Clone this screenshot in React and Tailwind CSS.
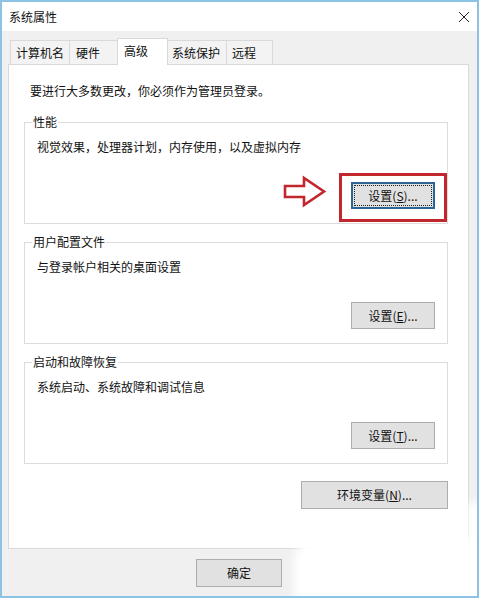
import React from "react";

const font = "font-['Noto_Sans_CJK_SC','Microsoft_YaHei',sans-serif]";

function Tab({ label, width, pl, selected, first }) {
  if (selected) {
    return (
      <div
        className={`relative z-10 -ml-px mb-[-1px] h-[27px] border-x border-t border-[#d9d9d9] bg-white pt-[4px] ${width}`}
      >
        <span className={pl}>{label}</span>
      </div>
    );
  }
  return (
    <div
      className={`h-[24px] border-x border-t border-[#d9d9d9] bg-[#f3f3f3] pt-[4px] ${first ? "" : "-ml-px"} ${width}`}
    >
      <span className={pl}>{label}</span>
    </div>
  );
}

function WinButton({ children, className = "", focused }) {
  return (
    <div
      className={`relative flex items-center justify-center bg-[#e1e1e1] ${
        focused ? "border-2 border-[#2c6594]" : "border border-[#adadad]"
      } ${className}`}
    >
      {focused && (
        <span className="pointer-events-none absolute inset-[1px] border border-dotted border-[#222]" />
      )}
      <span>{children}</span>
    </div>
  );
}

function Group({ title, desc, button, focused, className = "" }) {
  return (
    <fieldset className={`w-[424px] border border-[#dcdcdc] p-0 ${className}`}>
      <legend className="ml-[7px] px-[1px] leading-[16px]">{title}</legend>
      <div className="flex flex-col pl-[12px] pr-[12px] pt-[9px] pb-[14px]">
        <div className="leading-[16px]">{desc}</div>
        <div className="mt-[27px] flex justify-end">
          <WinButton focused={focused} className="h-[27px] w-[84px]">
            {button}
          </WinButton>
        </div>
      </div>
    </fieldset>
  );
}

export default function App() {
  return (
    <div
      className={`relative flex h-[598px] w-[479px] flex-col overflow-hidden border-2 border-[#8cc2e3] text-[12px] leading-[16px] text-[#111] ${font}`}
    >
      {/* title bar */}
      <div className="flex h-[29px] shrink-0 items-center justify-between bg-white pl-[7px] pr-[7px]">
        <span>系统属性</span>
        <svg width="12" height="12" viewBox="0 0 12 12" className="text-[#222]">
          <path d="M1 1 L11 11 M11 1 L1 11" stroke="currentColor" strokeWidth="1" fill="none" />
        </svg>
      </div>

      {/* dialog body */}
      <div className="flex flex-1 flex-col bg-[#f0f0f0] pl-[6px] pt-[7px]">
        <div className="flex h-[26px] items-end pl-[2px]">
          <Tab label="计算机名" width="w-[60px]" pl="pl-[5px]" first />
          <Tab label="硬件" width="w-[49px]" pl="pl-[6px]" />
          <Tab label="高级" width="w-[51px]" pl="pl-[6px]" selected />
          <Tab label="系统保护" width="w-[60px]" pl="pl-[4px]" />
          <Tab label="远程" width="w-[47px]" pl="pl-[5px]" />
        </div>

        <div className="flex h-[485px] w-[461px] flex-col border border-[#d9d9d9] bg-white pl-[15px] pt-[18px]">
          <div className="ml-[6px]">要进行大多数更改，你必须作为管理员登录。</div>

          <Group
            className="mt-[15px]"
            title="性能"
            desc="视觉效果，处理器计划，内存使用，以及虚拟内存"
            focused
            button={
              <>
                设置(<u>S</u>)...
              </>
            }
          />
          <Group
            className="mt-[10px]"
            title="用户配置文件"
            desc="与登录帐户相关的桌面设置"
            button={
              <>
                设置(<u>E</u>)...
              </>
            }
          />
          <Group
            className="mt-[10px]"
            title="启动和故障恢复"
            desc="系统启动、系统故障和调试信息"
            button={
              <>
                设置(<u>T</u>)...
              </>
            }
          />

          <div className="mt-[17px] flex w-[424px] justify-end">
            <WinButton className="h-[28px] w-[147px]">
              环境变量(<u>N</u>)...
            </WinButton>
          </div>
        </div>

        <div className="mt-[10px] flex">
          <WinButton className="ml-[188px] h-[28px] w-[86px]">确定</WinButton>
        </div>
      </div>

      {/* red callout around the performance settings button */}
      <div className="pointer-events-none absolute left-[337px] top-[171px] h-[49px] w-[108px] border-[3px] border-[#c1272d]" />
      <svg
        className="pointer-events-none absolute left-[280px] top-[173px]"
        width="46"
        height="34"
        viewBox="0 0 46 34"
      >
        <path
          d="M3 11 L22 11 L22 3 L42 16.5 L22 30 L22 22 L3 22 Z"
          fill="none"
          stroke="#c1272d"
          strokeWidth="2.6"
          strokeLinejoin="miter"
        />
      </svg>

      {/* soft white smudge in the lower right corner */}
      <div className="pointer-events-none absolute left-[292px] top-[538px] h-[80px] w-[200px] rounded-[20px] bg-white blur-[5px]" />
      <div className="pointer-events-none absolute right-[-4px] top-[500px] h-[60px] w-[14px] bg-white blur-[4px]" />
    </div>
  );
}
